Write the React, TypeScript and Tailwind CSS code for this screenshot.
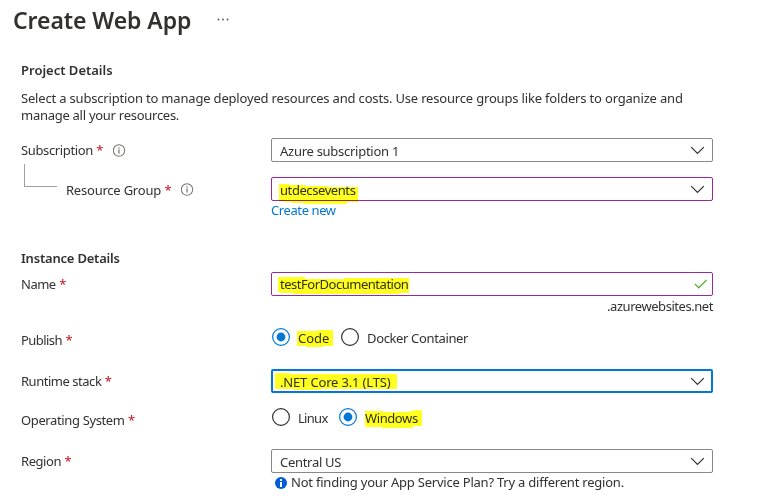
import type { ReactNode } from "react";

function Chevron() {
  return (
    <svg className="mr-[7px] h-2 w-4 shrink-0" viewBox="0 0 16 8" fill="none" stroke="#323130" strokeWidth="1.2">
      <path d="M2.2 1.1 8.5 7.4 14.8 1.1" />
    </svg>
  );
}

function Check() {
  return (
    <svg className="mr-[5px] h-[10px] w-[13px] shrink-0" viewBox="0 0 13 10" fill="none" stroke="#57b034" strokeWidth="1.3">
      <path d="M.8 4.9 4.7 8.8 12.6 1" />
    </svg>
  );
}

function Info() {
  return (
    <svg className="h-[13px] w-[13px] shrink-0" viewBox="0 0 13 13" fill="none" stroke="#7a7774">
      <circle cx="6" cy="6.5" r="5.7" strokeWidth="1.05" />
      <path d="M6 5.4v4.2M6 3.2v1.2" strokeWidth="1.3" />
    </svg>
  );
}

function Label({ children, className = "" }: { children: ReactNode; className?: string }) {
  return (
    <div className={`flex shrink-0 items-start whitespace-nowrap ${className}`}>
      <span>{children}</span>
      <span className="ml-[3.5px] font-medium tracking-normal text-[#c4262e]">*</span>
    </div>
  );
}

function Field({ children, border, icon, className = "" }: { children: ReactNode; border: string; icon: ReactNode; className?: string }) {
  return (
    <div className={`flex h-6 w-[442px] shrink-0 items-center justify-between rounded-[2px] bg-white ${border}`}>
      <div className={`relative whitespace-nowrap ${className}`}>{children}</div>
      {icon}
    </div>
  );
}

function Radio({ checked = false }: { checked?: boolean }) {
  return (
    <svg className="h-[18px] w-[18px] shrink-0" viewBox="0 0 18 18" fill="none">
      <circle cx="9" cy="9" r="8.4" stroke={checked ? "#0078d4" : "#323130"} strokeWidth="1.2" />
      {checked && <circle cx="9" cy="9" r="4.4" fill="#0078d4" />}
    </svg>
  );
}

function Marker({ points, className }: { points: string; className: string }) {
  return (
    <svg className={`pointer-events-none absolute overflow-visible mix-blend-multiply ${className}`}>
      <polygon points={points} fill="#ffff21" />
    </svg>
  );
}

export default function App() {
  return (
    <main className="h-[496px] w-[764px] overflow-hidden bg-white font-['Noto_Sans',sans-serif] text-[13px] leading-[18px] text-[#323130]">
      <header className="flex h-[61px] items-start pl-[13px] pt-1">
        <h1 className="w-[204px] whitespace-nowrap text-[23px] font-semibold leading-8 tracking-[-0.08px]">Create Web App</h1>
        <svg className="mt-[14px] h-[3px] w-3" viewBox="0 0 12 3" fill="#55534f">
          <circle cx="1.5" cy="1.5" r=".9" />
          <circle cx="6" cy="1.5" r=".9" />
          <circle cx="10.5" cy="1.5" r=".9" />
        </svg>
      </header>

      <section className="h-[188px] pl-[21px]">
        <h2 className="h-7 font-semibold">Project Details</h2>
        <p className="h-[49px] whitespace-nowrap pt-px leading-[17px] tracking-[-0.18px]">
          Select a subscription to manage deployed resources and costs. Use resource groups like folders to organize and
          <br />
          <span className="tracking-[-0.27px]">manage all your resources.</span>
        </p>
        <div className="flex h-[39px]">
          <div className="w-[250px] pt-[3px]">
            <div className="flex">
              <Label className="tracking-[-0.37px]">Subscription</Label>
              <div className="ml-[10px] mt-[3px]"><Info /></div>
            </div>
            <div className="ml-[3px] mt-[5px] h-[23px] w-[33px] border-b border-l border-[#a19f9d]" />
          </div>
          <Field border="border border-[#8a8886]" icon={<Chevron />} className="pl-2 pt-px tracking-[-0.27px]">Azure subscription 1</Field>
        </div>
        <div className="flex">
          <div className="flex w-[250px] pl-[45px] pt-1">
            <Label className="tracking-[-0.22px]">Resource Group</Label>
            <div className="ml-[9.5px] mt-[2px]"><Info /></div>
          </div>
          <div>
            <Field border="border border-[#962a9a]" icon={<Chevron />} className="pl-2 pt-px tracking-[-0.42px]">
              utdecsevents
              <Marker className="left-[7px] top-[4px] h-5 w-[79px]" points="0,0 10,0 10,1 26,1 26,2 48,2 48,3 79,3 79,18 68,18 68,20 25,20 25,19 13,19 13,18 5,18 5,17 0,17" />
            </Field>
            <div className="tracking-[-0.4px] text-[#0078d4]">Create new</div>
          </div>
        </div>
      </section>

      <section className="pl-[21px]">
        <h2 className="h-[23px] font-semibold tracking-[-0.2px]">Instance Details</h2>
        <div className="flex h-[55px]">
          <Label className="w-[250px] pt-[3px] tracking-[-0.5px]">Name</Label>
          <div className="w-[442px]">
            <Field border="border border-[#962a9a]" icon={<Check />} className="pl-2 tracking-[-0.48px]">
              testForDocumentation
              <Marker className="left-[6px] top-[2px] h-[18px] w-[131px]" points="0,0 27,0 27,2 66,2 66,1 131,1 131,16 121,16 121,17 15,17 15,16 2,16 2,15 0,15" />
            </Field>
            <div className="pt-[1px] text-right tracking-[-0.45px]">.azurewebsites.net</div>
          </div>
        </div>
        <div className="flex h-[42px]">
          <Label className="w-[250px] pt-1 tracking-[-0.55px]">Publish</Label>
          <div className="flex items-start pl-px pt-px">
            <Radio checked />
            <span className="relative ml-2 mt-px w-[43px]">
              Code
              <Marker className="left-[-1px] top-[2px] h-[17px] w-9" points="0,0 21,0 21,-1 36,-1 36,15 26,15 26,16 9,16 9,15 0,15" />
            </span>
            <Radio />
            <span className="ml-2 mt-px tracking-[-0.36px]">Docker Container</span>
          </div>
        </div>
        <div className="flex h-[39px]">
          <Label className="w-[250px] pt-[3px] tracking-[-0.47px]">Runtime stack</Label>
          <Field border="border-2 border-[#0078d4]" icon={<div className="-mr-px"><Chevron /></div>} className="pl-[7px] pt-px tracking-[-0.16px]">
            .NET Core 3.1 (LTS)
            <Marker className="left-[2px] top-[1px] h-[17px] w-[122px]" points="0,0 15,0 15,1 122,1 122,16 45,16 45,17 20,17 20,16 0,16" />
          </Field>
        </div>
        <div className="flex h-[41px]">
          <Label className="w-[250px] pt-[3px] tracking-[-0.37px]">Operating System</Label>
          <div className="flex items-start pl-px">
            <Radio />
            <span className="ml-2 mt-[1px] w-[41px] tracking-[-0.7px]">Linux</span>
            <Radio checked />
            <span className="relative ml-2 mt-[1px] tracking-[-0.4px]">
              Windows
              <Marker className="left-0 top-px h-[18px] w-[57px]" points="0,1 18,1 18,2 44,2 44,1 49,1 49,0 57,0 57,16 48,16 48,18 17,18 17,17 0,17" />
            </span>
          </div>
        </div>
        <div className="flex">
          <Label className="w-[250px] pt-[3px] tracking-[-0.45px]">Region</Label>
          <div>
            <Field border="border border-[#8a8886]" icon={<Chevron />} className="pl-2 pt-px tracking-[-0.3px]">Central US</Field>
            <div className="flex pl-1">
              <svg className="mr-[4px] mt-[4px] h-3 w-3" viewBox="0 0 12 12">
                <circle cx="6" cy="6" r="6" fill="#015cda" />
                <path d="M6 2v2M6 5v5" stroke="white" strokeWidth="2" />
              </svg>
              <span className="whitespace-nowrap tracking-[-0.22px]">Not finding your App Service Plan? Try a different region.</span>
            </div>
          </div>
        </div>
      </section>
    </main>
  );
}
